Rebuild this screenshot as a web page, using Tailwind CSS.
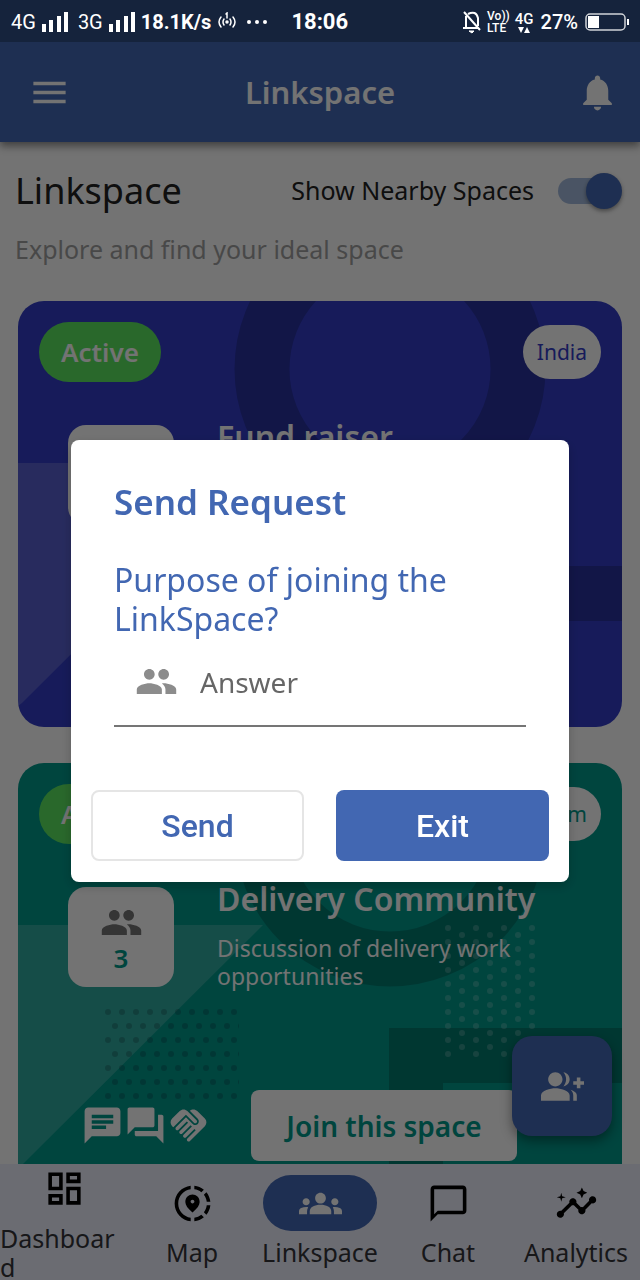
<!DOCTYPE html>
<html lang="en">
<head>
<meta charset="utf-8">
<meta name="viewport" content="width=device-width, initial-scale=1">
<title>Linkspace</title>
<script src="https://cdn.jsdelivr.net/npm/@tailwindcss/browser@4"></script>
</head>
<body class="h-screen overflow-hidden bg-[#fafafa] font-['Noto_Sans',sans-serif] text-[#212121]">

<!-- Shared symbols -->
<svg class="absolute size-0" aria-hidden="true">
  <defs>
    <pattern id="dots-light" x="427" y="162" width="28" height="14" patternUnits="userSpaceOnUse">
      <circle cx="3" cy="3" r="3" fill="#fff"/><circle cx="17" cy="10" r="3" fill="#fff"/>
    </pattern>
    <pattern id="dots-dark" x="87" y="246" width="14" height="28" patternUnits="userSpaceOnUse">
      <circle cx="3" cy="3" r="3" fill="#123"/><circle cx="10" cy="17" r="3" fill="#123"/>
    </pattern>
  </defs>
  <symbol id="card-art" viewBox="0 0 604 426">
    <path d="M0 162h245L4 402l-4 3z" fill="#fff" opacity=".18"/>
    <circle cx="372" cy="68" r="128" fill="none" stroke="#000" stroke-width="55" opacity=".2"/>
    <path d="M371 265h233v55H425v106h-54z" fill="#000" opacity=".2"/>
    <path d="M427 162h90v132h-90z" fill="url(#dots-light)" opacity=".2"/>
    <path d="M87 246h134v90H87z" fill="url(#dots-dark)" opacity=".25"/>
  </symbol>
  <symbol id="people" viewBox="0 0 24 24"><path d="M16 11c1.66 0 2.99-1.34 2.99-3S17.66 5 16 5c-1.66 0-3 1.34-3 3s1.34 3 3 3zm-8 0c1.66 0 2.99-1.34 2.99-3S9.66 5 8 5C6.34 5 5 6.34 5 8s1.34 3 3 3zm0 2c-2.33 0-7 1.17-7 3.5V19h14v-2.5c0-2.33-4.67-3.5-7-3.5zm8 0c-.29 0-.62.02-.97.05 1.16.84 1.97 1.97 1.97 3.45V19h6v-2.5c0-2.33-4.67-3.5-7-3.5z"/></symbol>
  <symbol id="signal" viewBox="0 0 26 20"><path d="M0 12h4v8H0zM7 8h4v12H7zM15 4h4v16h-4zM22 0h4v20h-4z"/></symbol>
</svg>

<div class="flex h-full flex-col">
  <!-- Status bar -->
  <div class="relative z-50 flex h-[42px] shrink-0 items-center justify-between bg-[#15233c] px-[11px] pt-[2px] font-['Roboto',sans-serif] text-xl text-white">
    <div class="flex items-center gap-[6px]">
      <span>4G</span>
      <svg class="h-5 w-[26px] fill-current"><use href="#signal"/></svg>
      <span class="ml-1">3G</span>
      <svg class="h-5 w-[26px] fill-current"><use href="#signal"/></svg>
      <span class="font-bold">18.1K/s</span>
      <svg class="h-5 w-5" viewBox="0 0 20 20" fill="none" stroke="currentColor" stroke-width="1.5" stroke-linecap="round"><path d="M4 5q-4 5 0 10M16 5q4 5 0 10M7 7q-2 3 0 6M13 7q2 3 0 6M9 2l1-1v5"/><circle cx="10" cy="10" r="1" fill="currentColor"/></svg>
      <svg class="ml-1 h-1 w-5 fill-current" viewBox="0 0 20 4"><circle cx="2" cy="2" r="2"/><circle cx="10" cy="2" r="2"/><circle cx="18" cy="2" r="2"/></svg>
      <span class="ml-[18px] text-[22px] font-bold">18:06</span>
    </div>
    <div class="flex items-center gap-[5px]">
      <svg class="h-6 w-5" viewBox="0 0 20 24" fill="none" stroke="currentColor" stroke-width="2"><path d="M2 2l16 18M4 6v12h12M6 4q8-4 10 4v8M1 18h15"/><path d="M7 21h5l-2 2z" fill="currentColor" stroke-width="1"/></svg>
      <span class="flex flex-col text-xs font-medium"><span class="leading-3">Vo))</span><span class="leading-3">LTE</span></span>
      <span class="flex flex-col items-center text-[15px] leading-4 font-medium"><span>4G</span>
        <svg class="h-[6px] w-3 fill-current" viewBox="0 0 12 6"><path d="M0 0h6L3 6zM6 6h6L9 0z"/></svg></span>
      <span class="ml-[2px] font-medium">27%</span>
      <svg class="ml-[2px] h-[18px] w-11" viewBox="0 0 44 18"><rect x="1" y="1" width="39" height="16" rx="4" fill="none" stroke="#fff" stroke-opacity=".8" stroke-width="1.5"/><path d="M3 3h11v12H3zM42 6h2v6h-2z" fill="#fff"/></svg>
    </div>
  </div>

  <!-- App bar -->
  <header class="relative z-10 grid h-[100px] shrink-0 grid-cols-[1fr_auto_1fr] items-center bg-[#4267b2] pr-[21px] pl-7 text-[#fafafa] shadow-[0_4px_8px_rgba(0,0,0,0.45)]">
    <button type="button" aria-label="Menu" class="justify-self-start"><svg class="size-[43px] fill-current" viewBox="0 0 24 24"><path d="M3 18h18v-2H3v2zm0-5h18v-2H3v2zm0-7v2h18V6H3z"/></svg></button>
    <h1 class="pr-[7px] text-[31px] font-semibold">Linkspace</h1>
    <button type="button" aria-label="Notifications" class="justify-self-end"><svg class="size-[43px] fill-current" viewBox="0 0 24 24"><path d="M12 22c1.1 0 2-.9 2-2h-4c0 1.1.89 2 2 2zm6-6v-5c0-3.07-1.64-5.64-4.5-6.32V4c0-.83-.67-1.5-1.5-1.5s-1.5.67-1.5 1.5v.68C7.63 5.36 6 7.92 6 11v5l-2 2v1h16v-1l-2-2z"/></svg></button>
  </header>

  <main class="min-h-0 flex-1 overflow-hidden">
    <div class="flex items-center justify-between pt-6 pr-[18px] pl-[15px]">
      <h2 class="text-[36px] leading-[50px]">Linkspace</h2>
      <label class="flex items-center gap-6 text-[25px]">Show Nearby Spaces
        <input type="checkbox" role="switch" checked class="relative h-[26px] w-16 appearance-none rounded-full before:absolute before:inset-y-0 before:left-0 before:w-[52px] before:rounded-full before:bg-[#a2b8da] after:absolute after:-top-[5px] after:right-0 after:size-9 after:rounded-full after:bg-[#4267b2] after:shadow-[0_2px_4px_rgba(0,0,0,0.4)]">
      </label>
    </div>
    <p class="mt-[15px] px-[15px] text-[25px] leading-9 text-[#9e9e9e]">Explore and find your ideal space</p>

    <div class="mt-[34px] flex flex-col gap-9 px-[18px]">
      <article class="relative h-[426px] overflow-hidden rounded-[26px] bg-[#323cc4] p-[21px] text-[#fafafa]">
        <svg class="absolute inset-0 size-full" preserveAspectRatio="none"><use href="#card-art"/></svg>
        <div class="relative flex items-center justify-between">
          <span class="rounded-full bg-[#5be25f] px-[22px] py-3 text-[26px] leading-9 font-semibold">Active</span>
          <span class="rounded-full bg-[#fafafa] px-[14px] py-3 text-[21px] leading-[30px] text-[#323cc4]">India</span>
        </div>
        <div class="relative mt-[43px] flex gap-[43px] pl-[29px]">
          <div class="h-[100px] w-[106px] shrink-0 rounded-[18px] bg-[#fafafa]"></div>
          <h3 class="-mt-2 text-[32px] leading-10 font-semibold">Fund raiser</h3>
        </div>
      </article>

      <article class="relative h-[426px] overflow-hidden rounded-[26px] bg-[#009688] p-[21px] text-[#fafafa]">
        <svg class="absolute inset-0 size-full" preserveAspectRatio="none"><use href="#card-art"/></svg>
        <div class="relative flex items-center justify-between">
          <span class="rounded-full bg-[#5be25f] px-[22px] py-3 text-[26px] leading-9 font-semibold">Active</span>
          <span class="w-[78px] rounded-full bg-[#fafafa] px-[14px] py-3 text-right text-[21px] leading-[30px] text-[#009688]">m</span>
        </div>
        <div class="relative mt-[43px] flex gap-[43px] pl-[29px]">
          <div class="flex h-[100px] w-[106px] shrink-0 flex-col items-center rounded-[18px] bg-[#fafafa] pt-[14px] text-[26px] leading-7 font-semibold text-[#009688]">
            <svg class="size-[43px] fill-[#757575]"><use href="#people"/></svg>
            3
          </div>
          <div class="-mt-2">
            <h3 class="text-[32px] leading-10 font-semibold whitespace-nowrap">Delivery Community</h3>
            <p class="mt-[15px] text-[23px] leading-7">Discussion of delivery work opportunities</p>
          </div>
        </div>
        <div class="relative mt-[100px] flex items-center justify-between pr-[84px] pl-[42px]">
          <div class="flex">
            <svg class="size-[43px] fill-[#fafafa]" viewBox="0 0 24 24"><path d="M20 2H4c-1.1 0-1.99.9-1.99 2L2 22l4-4h14c1.1 0 2-.9 2-2V4c0-1.1-.9-2-2-2zM6 9h12v2H6V9zm8 5H6v-2h8v2zm4-6H6V6h12v2z"/></svg>
            <svg class="size-[43px] fill-[#fafafa]" viewBox="0 0 24 24"><path d="M21 6h-2v9H6v2c0 .55.45 1 1 1h11l4 4V7c0-.55-.45-1-1-1zm-4 6V3c0-.55-.45-1-1-1H3c-.55 0-1 .45-1 1v14l4-4h10c.55 0 1-.45 1-1z"/></svg>
            <svg class="size-[43px] fill-[#fafafa]" viewBox="0 0 24 24"><path d="M16.48 10.41c-.39.39-1.04.39-1.43 0l-4.47-4.46-7.05 7.04-.66-.63c-1.17-1.17-1.17-3.07 0-4.24l4.24-4.24c1.17-1.17 3.07-1.17 4.24 0L16.48 9c.39.39.39 1.02 0 1.41zM17.18 8.29c.78.78.78 2.05 0 2.83-1.27 1.27-2.61.22-2.83 0l-3.76-3.76-5.57 5.57c-.39.39-.39 1.02 0 1.41.39.39 1.02.39 1.42 0l4.62-4.62.71.71-4.62 4.62c-.39.39-.39 1.02 0 1.41.39.39 1.02.39 1.42 0l4.62-4.62.71.71-4.62 4.62c-.39.39-.39 1.02 0 1.41.39.39 1.02.39 1.41 0l4.62-4.62.71.71-4.62 4.62c-.39.39-.39 1.02 0 1.41.39.39 1.02.39 1.41 0l8.32-8.34c1.17-1.17 1.17-3.07 0-4.24l-4.24-4.24c-1.15-1.15-3.01-1.17-4.18-.06L17.18 8.29z"/></svg>
          </div>
          <button type="button" class="h-[71px] w-[266px] rounded-lg bg-[#fafafa] text-[28px] font-semibold text-[#009688]">Join this space</button>
        </div>
      </article>
    </div>
  </main>

  <!-- Floating action button -->
  <button type="button" aria-label="Add group" class="absolute right-7 bottom-36 flex size-[100px] items-center justify-center rounded-[20px] bg-[#4267b2] shadow-[0_5px_12px_rgba(0,0,0,0.4)]">
    <svg class="size-[43px] fill-[#fafafa]" viewBox="0 0 24 24"><path d="M22 9V7h-2v2h-2v2h2v2h2v-2h2V9zM8 12c2.21 0 4-1.79 4-4s-1.79-4-4-4-4 1.79-4 4 1.79 4 4 4zm0 1c-2.67 0-8 1.34-8 4v3h16v-3c0-2.66-5.33-4-8-4zm4.51-8.95C13.43 5.11 14 6.49 14 8s-.57 2.89-1.49 3.95C14.47 11.7 16 10.04 16 8s-1.53-3.7-3.49-3.95zm4.02 9.78C17.42 14.66 18 15.7 18 17v3h2v-3c0-1.45-1.59-2.51-3.47-3.17z"/></svg>
  </button>

  <!-- Bottom navigation -->
  <nav class="grid h-[116px] shrink-0 grid-cols-5 bg-[#e9ebf8] text-[25px] leading-[29px] text-[#333338]">
    <a href="#" class="flex flex-col items-center pt-[3px]">
      <svg class="size-[43px] shrink-0 fill-black" viewBox="0 0 24 24"><path d="M19 5v2h-4V5h4M9 5v6H5V5h4m10 8v6h-4v-6h4M9 17v2H5v-2h4M21 3h-8v6h8V3zM11 3H3v10h8V3zm10 8h-8v10h8V11zm-10 4H3v6h8v-6z"/></svg>
      <span class="mt-[14px] w-full pr-3 break-all">Dashboard</span>
    </a>
    <a href="#" class="flex flex-col items-center pt-[11px]">
      <span class="flex h-14 items-center"><svg class="size-[43px] fill-black" viewBox="0 0 24 24"><path fill-rule="evenodd" d="M13.02 19.93v2.02c2.01-.2 3.84-1 5.32-2.21l-1.42-1.43c-1.11.86-2.44 1.44-3.9 1.62zM4.03 12c0-4.05 3.03-7.41 6.95-7.93V2.05C5.95 2.58 2.03 6.84 2.03 12c0 5.16 3.92 9.42 8.95 9.95v-2.02C7.06 19.41 4.03 16.05 4.03 12zM19.95 11h2.02c-.2-2.01-1-3.84-2.21-5.32l-1.43 1.43c.86 1.1 1.44 2.43 1.62 3.89zM18.34 4.26c-1.48-1.21-3.32-2.01-5.32-2.21v2.02c1.46.18 2.79.76 3.9 1.62l1.42-1.43zM18.33 16.9l1.43 1.42c1.21-1.48 2.01-3.31 2.21-5.32h-2.02c-.18 1.46-.76 2.79-1.62 3.9zM16 11.1C16 8.61 14.1 7 12 7s-4 1.61-4 4.1c0 1.66 1.33 3.63 4 5.9 2.67-2.27 4-4.24 4-5.9zM12 12c-.59 0-1.07-.48-1.07-1.07s.48-1.07 1.07-1.07 1.07.48 1.07 1.07S12.59 12 12 12z"/></svg></span>
      <span class="mt-[7px]">Map</span>
    </a>
    <a href="#" aria-current="page" class="flex flex-col items-center pt-[11px]">
      <span class="flex h-14 w-[114px] items-center justify-center rounded-full bg-[#4267b2]"><svg class="size-[43px] fill-[#fafafa]" viewBox="0 0 24 24"><path d="M12 12.75c1.63 0 3.07.39 4.24.9 1.08.48 1.76 1.56 1.76 2.73V18H6v-1.61c0-1.18.68-2.26 1.76-2.73 1.17-.52 2.61-.91 4.24-.91zM4 13c1.1 0 2-.9 2-2s-.9-2-2-2-2 .9-2 2 .9 2 2 2zm1.13 1.1c-.37-.06-.74-.1-1.13-.1-.99 0-1.93.21-2.78.58C.48 14.9 0 15.62 0 16.43V18h4.5v-1.61c0-.83.23-1.61.63-2.29zM20 13c1.1 0 2-.9 2-2s-.9-2-2-2-2 .9-2 2 .9 2 2 2zm4 3.43c0-.81-.48-1.53-1.22-1.85-.85-.37-1.79-.58-2.78-.58-.39 0-.76.04-1.13.1.4.68.63 1.46.63 2.29V18H24v-1.57zM12 6c1.66 0 3 1.34 3 3s-1.34 3-3 3-3-1.34-3-3 1.34-3 3-3z"/></svg></span>
      <span class="mt-[7px]">Linkspace</span>
    </a>
    <a href="#" class="flex flex-col items-center pt-[11px]">
      <span class="flex h-14 items-center"><svg class="size-[43px] fill-black" viewBox="0 0 24 24"><path d="M20 2H4c-1.1 0-2 .9-2 2v18l4-4h14c1.1 0 2-.9 2-2V4c0-1.1-.9-2-2-2zm0 14H6l-2 2V4h16v12z"/></svg></span>
      <span class="mt-[7px]">Chat</span>
    </a>
    <a href="#" class="flex flex-col items-center pt-[11px]">
      <span class="flex h-14 items-center"><svg class="size-[43px] fill-black" viewBox="0 0 24 24"><path d="M21 8c-1.45 0-2.26 1.44-1.93 2.51l-3.55 3.56c-.3-.09-.74-.09-1.04 0l-2.55-2.55C12.27 10.45 11.46 9 10 9c-1.45 0-2.27 1.44-1.93 2.52l-4.56 4.55C2.44 15.74 1 16.55 1 18c0 1.1.9 2 2 2 1.45 0 2.26-1.44 1.93-2.51l4.55-4.56c.3.09.74.09 1.04 0l2.55 2.55C12.73 16.55 13.54 18 15 18c1.45 0 2.27-1.44 1.93-2.52l3.56-3.55C21.56 12.26 23 11.45 23 10c0-1.1-.9-2-2-2zM15 9l.94-2.07L18 6l-2.06-.93L15 3l-.92 2.07L12 6l2.08.93zM3.5 11L4 9l2-.5L4 8l-.5-2L3 8l-2 .5L3 9z"/></svg></span>
      <span class="mt-[7px]">Analytics</span>
    </a>
  </nav>
</div>

<!-- Modal -->
<div class="fixed inset-0 z-40 flex items-center justify-center bg-black/54 px-[71px] pt-[42px]">
  <form role="dialog" aria-labelledby="dialog-title" class="w-full rounded-lg bg-white px-5 pt-[38px] pb-[21px] text-[#4267b2] shadow-[0_4px_12px_rgba(0,0,0,0.2)]">
    <div class="px-[23px]">
      <h2 id="dialog-title" class="text-[35px] leading-[48px] font-semibold">Send Request</h2>
      <label for="answer" class="mt-[34px] block text-[32px] leading-[39px]">Purpose of joining the LinkSpace?</label>
      <div class="flex h-[89px] items-center gap-[22px] border-b-2 border-[#757575] pl-[21px]">
        <svg class="size-[43px] shrink-0 fill-[#8c8c8c]"><use href="#people"/></svg>
        <input id="answer" type="text" placeholder="Answer" class="w-full min-w-0 bg-transparent text-[28px] text-[#666] outline-none placeholder:text-[#666]">
      </div>
    </div>
    <div class="mt-[63px] grid grid-cols-2 gap-8 font-['Roboto',sans-serif] text-[32px] font-medium">
      <button type="button" class="h-[71px] rounded-lg border-2 border-[#e5e5e5]">Send</button>
      <button type="button" class="h-[71px] rounded-lg bg-[#4267b2] text-white">Exit</button>
    </div>
  </form>
</div>
</body>
</html>
